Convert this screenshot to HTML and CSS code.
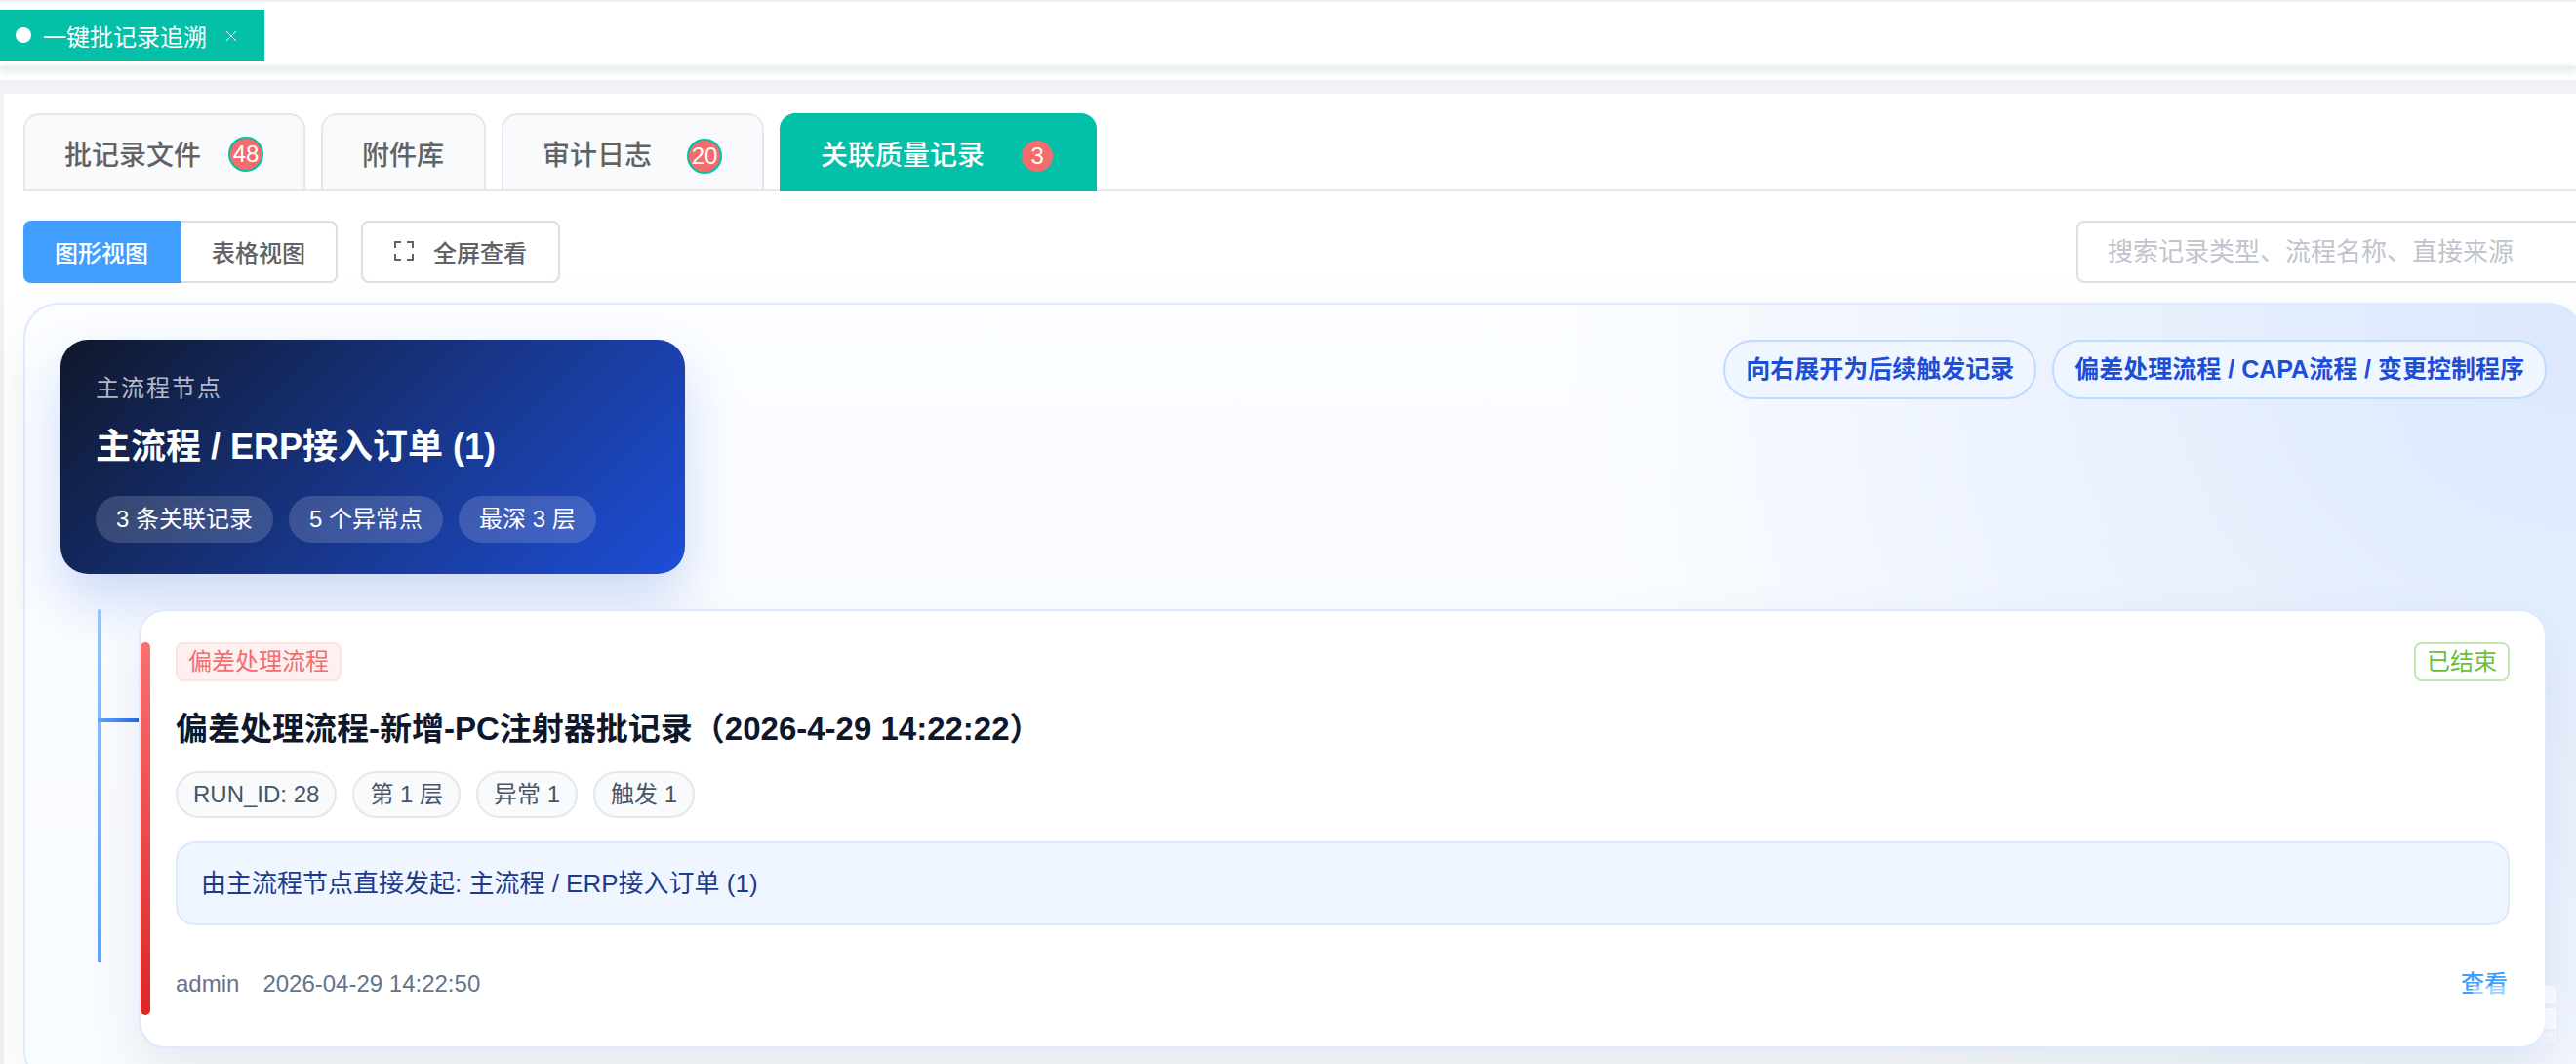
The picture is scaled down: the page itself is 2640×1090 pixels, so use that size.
FILE: index.html
```
<!DOCTYPE html>
<html lang="zh-CN">
<head>
<meta charset="UTF-8">
<meta name="viewport" content="width=device-width, initial-scale=1">
<title>一键批记录追溯</title>
<link rel="stylesheet" href="styles.css">
</head>
<body>
<nav class="tags-view" aria-label="已打开页面">
  <div class="tags-item">
    <a href="#">一键批记录追溯</a>
    <button type="button" class="tags-close" aria-label="关闭">
      <svg viewBox="0 0 10 10"><path d="M0 0l10 10M10 0l-10 10"/></svg>
    </button>
  </div>
</nav>

<main class="page">
  <div class="tabs" role="tablist">
    <button type="button" role="tab" class="tab">批记录文件<span class="badge badge-near">48</span></button>
    <button type="button" role="tab" class="tab">附件库</button>
    <button type="button" role="tab" class="tab">审计日志<span class="badge">20</span></button>
    <button type="button" role="tab" class="tab active" aria-selected="true">关联质量记录<span class="badge">3</span></button>
  </div>

  <div class="toolbar">
    <div class="view-switch">
      <button type="button" class="active">图形视图</button>
      <button type="button">表格视图</button>
    </div>
    <button type="button" class="btn-full">
      <svg viewBox="0 0 20 20"><path d="M1 7V1h6M13 1h6v6M19 13v6h-6M7 19H1v-6"/></svg>
      全屏查看
    </button>
    <input type="text" class="search" placeholder="搜索记录类型、流程名称、直接来源" aria-label="搜索">
  </div>

  <section class="graph">
    <div class="graph-head">
      <div class="root-node">
        <div class="root-label">主流程节点</div>
        <h2>主流程 / ERP接入订单 (1)</h2>
        <div class="root-chips">
          <span>3 条关联记录</span>
          <span>5 个异常点</span>
          <span>最深 3 层</span>
        </div>
      </div>
      <div class="legend">
        <span>向右展开为后续触发记录</span>
        <span>偏差处理流程 / CAPA流程 / 变更控制程序</span>
      </div>
    </div>

    <div class="branch">
      <article class="record">
        <div class="record-top">
          <span class="tag tag-danger">偏差处理流程</span>
          <span class="tag tag-success">已结束</span>
        </div>
        <h3>偏差处理流程-新增-PC注射器批记录（2026-4-29 14:22:22）</h3>
        <div class="chips">
          <span>RUN_ID: 28</span>
          <span>第 1 层</span>
          <span>异常 1</span>
          <span>触发 1</span>
        </div>
        <p class="source">由主流程节点直接发起: 主流程 / ERP接入订单 (1)</p>
        <footer class="record-foot">
          <span>admin</span>
          <span>2026-04-29 14:22:50</span>
          <a href="#">查看</a>
        </footer>
      </article>
    </div>
  </section>
</main>

<!-- 右下角水印 -->
<div class="watermark" aria-hidden="true">
  <svg viewBox="0 0 86 44"><path d="M0 0h80a6 6 0 0 1 6 6v12H0zM0 23h86v21H0z"/></svg>
  <span>CN</span>
</div>
</body>
</html>
```

FILE: styles.css
```
* {
  box-sizing: border-box;
}
body {
  margin: 0;
  background: #f0f2f5;
  color: #606266;
  font-family: "Liberation Sans", "Noto Sans CJK SC", sans-serif;
  font-size: 24px;
  overflow: hidden;
}
button, input {
  font-family: inherit;
  font-size: inherit;
  color: inherit;
}
button {
  cursor: pointer;
}
h2, h3, p {
  margin: 0;
}

/* 顶部标签栏 */
.tags-view {
  background: #fff;
  height: 82px;
  padding-top: 8px;
  border-top: 2px solid #eee;
}
.tags-view::after {
  content: "";
  display: block;
  height: 2px;
  margin-top: 6px;
  background: #e0f6f2;
  box-shadow: 0 2px 6px rgba(0, 0, 0, 0.25);
}
.tags-item {
  display: inline-flex;
  vertical-align: top;
  align-items: center;
  height: 52px;
  padding: 0 29px 0 16px;
  background: #04c0a8;
  color: #fff;
}
.tags-item::before {
  content: "";
  width: 16px;
  height: 16px;
  margin-right: 12px;
  border-radius: 50%;
  background: #fff;
}
.tags-item a {
  color: inherit;
  text-decoration: none;
}
.tags-close {
  display: flex;
  margin-left: 20px;
  padding: 2px 0 0;
  border: 0;
  background: none;
}
.tags-close svg {
  width: 10px;
  height: 10px;
  fill: none;
  stroke: #fff;
}

.page {
  min-height: 1000px;
  margin: 14px -28px 0 4px;
  padding: 20px;
  background: #fff;
}

/* 页签 */
.tabs {
  display: flex;
  gap: 16px;
  border-bottom: 2px solid #e4e7ed;
}
.tab {
  display: flex;
  align-items: center;
  height: 80px;
  margin-bottom: -2px;
  padding: 2px 41px 0 40px;
  border: 2px solid #e4e7ed;
  border-radius: 16px 16px 0 0;
  background: #f8fafc;
  font-size: 28px;
  font-weight: 500;
}
.tab.active {
  border-color: #04c0a8;
  background: #04c0a8;
  color: #fff;
}
.badge {
  width: 36px;
  height: 36px;
  margin: 6px 0 0 36px;
  border: 2px solid #04c0a8;
  border-radius: 50%;
  background: #f56c6c;
  color: #fff;
  font-size: 24px;
  line-height: 32px;
  text-align: center;
}
.badge-near {
  margin: 2px 0 0 28px;
}

/* 工具栏 */
.toolbar {
  display: flex;
  align-items: center;
  margin-top: 30px;
  font-weight: 500;
}
.view-switch {
  display: flex;
  margin-right: 24px;
}
.view-switch button {
  height: 64px;
  padding: 0 31px 2px;
  border: 2px solid #dcdfe6;
  border-left: 0;
  border-radius: 0 8px 8px 0;
  background: #fff;
  font-weight: 500;
}
.view-switch .active {
  padding: 0 32px 2px;
  border-color: #409eff;
  border-radius: 8px 0 0 8px;
  background: #409eff;
  color: #fff;
}
.btn-full {
  display: flex;
  align-items: center;
  gap: 20px;
  height: 64px;
  padding: 0 32px 2px;
  border: 2px solid #dcdfe6;
  border-radius: 8px;
  background: #fff;
  font-weight: 500;
}
.btn-full svg {
  width: 20px;
  height: 20px;
  fill: none;
  stroke: #606266;
  stroke-width: 2;
}
.search {
  width: 520px;
  height: 64px;
  margin-left: auto;
  padding: 0 30px;
  border: 2px solid #dcdfe6;
  border-radius: 8px;
  background: #fff;
  font-size: 26px;
}
.search::placeholder {
  color: #c0c4cc;
}

/* 图形视图 */
.graph {
  margin-top: 20px;
  padding: 36px;
  border: 2px solid #dbeafe;
  border-radius: 36px;
  background:
    radial-gradient(circle at top right, #dbe7fd, rgba(219, 231, 253, 0) 38%),
    linear-gradient(180deg, #fbfdff 0%, #f8fbff 100%);
  box-shadow: 0 24px 72px rgba(15, 23, 42, 0.06);
}
.graph-head {
  display: flex;
  justify-content: space-between;
  align-items: flex-start;
}
.root-node {
  width: 640px;
  padding: 34px 36px 32px;
  border-radius: 28px;
  background: linear-gradient(135deg, #0f172a 0%, #162f73 40%, #1d4ed8 100%);
  box-shadow: 0 28px 56px rgba(29, 78, 216, 0.2);
  color: #fff;
}
.root-label {
  color: rgba(255, 255, 255, 0.7);
  line-height: 32px;
  letter-spacing: 2px;
}
.root-node h2 {
  margin: 20px 0 26px;
  font-size: 36px;
  line-height: 48px;
}
.root-chips, .chips, .legend {
  display: flex;
  gap: 16px;
}
.root-chips span {
  padding: 0 21px;
  border-radius: 24px;
  background: rgba(255, 255, 255, 0.16);
  line-height: 48px;
}
.legend span {
  padding: 0 21px;
  border: 2px solid #bfdbfe;
  border-radius: 30px;
  background: #eff6ff;
  color: #1d4ed8;
  font-size: 25px;
  font-weight: 700;
  line-height: 57px;
}

/* 分支连线 */
.branch {
  position: relative;
  margin-top: 36px;
  padding-left: 80px;
}
.branch::before {
  content: "";
  position: absolute;
  top: 0;
  bottom: 88px;
  left: 38px;
  width: 4px;
  border-radius: 4px;
  background: linear-gradient(180deg, #93c5fd, #60a5fa);
}
.branch::after {
  content: "";
  position: absolute;
  top: 112px;
  left: 38px;
  width: 42px;
  height: 4px;
  background: linear-gradient(90deg, #60a5fa, #2563eb);
}

/* 记录卡片 */
.record {
  position: relative;
  padding: 32px 36px;
  border: 2px solid #dbeafe;
  border-radius: 28px;
  background: #fff;
  box-shadow: 0 24px 56px rgba(15, 23, 42, 0.08);
}
.record::before {
  content: "";
  position: absolute;
  top: 32px;
  bottom: 32px;
  left: 0;
  width: 10px;
  border-radius: 5px;
  background: linear-gradient(180deg, #f87171, #dc2626);
}
.record-top {
  display: flex;
  justify-content: space-between;
}
.tag {
  padding: 0 11px;
  border: 2px solid #fde2e2;
  border-radius: 8px;
  line-height: 36px;
}
.tag-danger {
  background: #fef0f0;
  color: #f56c6c;
}
.tag-success {
  border-color: #c2e7b0;
  background: #fff;
  color: #67c23a;
}
.record h3 {
  margin: 26px 0 20px;
  color: #0f172a;
  font-size: 33px;
  line-height: 46px;
}
.chips span {
  padding: 0 16px;
  border: 2px solid #e2e8f0;
  border-radius: 24px;
  background: #f8fafc;
  color: #475569;
  line-height: 44px;
}
.source {
  margin-top: 24px;
  padding: 20px 24px;
  border: 2px solid #dbeafe;
  border-radius: 20px;
  background: #eff6ff;
  color: #1e3a8a;
  font-size: 26px;
  line-height: 42px;
}
.record-foot {
  display: flex;
  gap: 24px;
  margin-top: 28px;
  color: #64748b;
  line-height: 64px;
}
.record-foot a {
  margin-left: auto;
  padding-right: 2px;
  color: #409eff;
  font-weight: 500;
  text-decoration: none;
}

.watermark {
  position: fixed;
  right: 20px;
  bottom: 18px;
  width: 86px;
  color: rgba(255, 255, 255, 0.5);
  font-size: 12px;
  line-height: 18px;
  text-align: right;
  pointer-events: none;
}
.watermark svg {
  display: block;
  width: 86px;
  height: 44px;
  fill: rgba(255, 255, 255, 0.5);
}
```
